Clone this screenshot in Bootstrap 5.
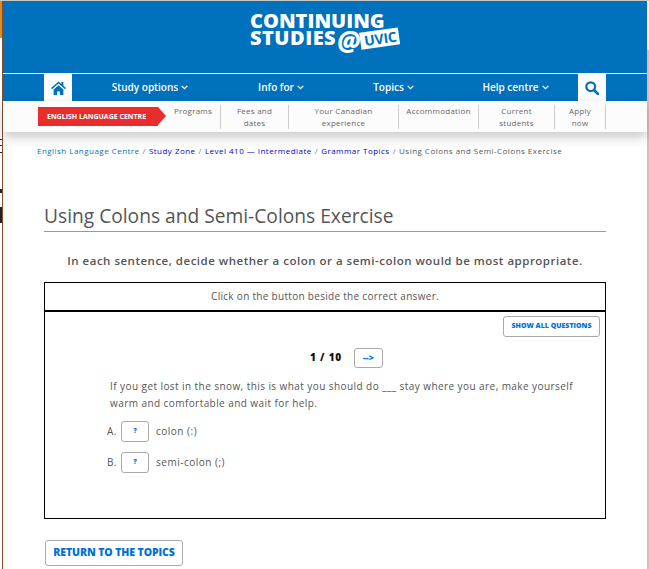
<!DOCTYPE html>
<html lang="en">
<head>
    <meta charset="UTF-8">
    <meta name="viewport" content="width=device-width, initial-scale=1.0">
    <title>Using Colons and Semi-Colons Exercise</title>
    <link rel="stylesheet" href="https://cdn.jsdelivr.net/npm/bootstrap@5.3.0/dist/css/bootstrap.min.css">
    <style>
        html, body {
            height: 569px;
            overflow: hidden;
        }
        body {
            background: #fff;
            font-family: "Open Sans", "Noto Sans", sans-serif;
            color: #555;
            padding-top: 1px;
            box-shadow: inset 0 1px 0 #c8c8c8;
        }
        .window-edge {
            width: 3px;
            height: 568px;
            flex: none;
            position: relative;
            border-right: 1px solid #8a4b2c;
            background: linear-gradient(to bottom, #d98a2b 0, #d98a2b 37px, #fff 37px);
        }
        .edge-mark {
            position: absolute;
            left: 0;
            width: 2px;
            background: #222;
        }
        .scroll-strip {
            width: 2px;
            height: 568px;
            flex: none;
            background: linear-gradient(to bottom, #f2f2f2 0, #f2f2f2 49px, #c6c6c6 49px);
        }
        .page-main {
            width: 644px;
            flex: none;
        }
        .site-head {
            background: #0071bc;
            height: 100px;
        }
        .logo-zone {
            height: 72px;
            padding-left: 247px;
            padding-top: 11px;
            color: #fff;
            font-weight: 800;
            font-size: 20px;
            line-height: 17px;
        }
        .logo-line {
            display: flex;
            align-items: center;
            letter-spacing: .5px;
        }
        .logo-at {
            font-size: 26px;
            line-height: 17px;
            font-style: italic;
            margin-left: 1px;
            letter-spacing: 0;
            transform: translateY(3px);
        }
        .logo-uvic {
            background: #fff;
            color: #0071bc;
            font-size: 14px;
            line-height: 17px;
            font-weight: 700;
            letter-spacing: -.2px;
            padding: 0 3px 0 4px;
            margin-left: 0;
            transform: rotate(-8deg) translateY(1px);
        }
        .main-nav {
            height: 28px;
            border-top: 1px solid #fff;
            padding-left: 41px;
            padding-right: 41px;
        }
        .nav-square {
            width: 28px;
            height: 27px;
            background: #fff;
            flex: none;
        }
        .main-links {
            flex: 1;
            color: #fff;
            font-size: 10px;
            font-weight: 600;
        }
        .main-link {
            text-align: center;
            color: #fff;
            text-decoration: none;
            flex: none;
        }
        .main-link:nth-child(1) { width: 156px; }
        .main-link:nth-child(2) { width: 106px; }
        .main-link:nth-child(3) { width: 119px; }
        .main-link:nth-child(4) { width: 125px; }
        .chev {
            width: 7px;
            height: 5px;
            margin-left: 3px;
            vertical-align: 1px;
        }
        .sub-nav {
            height: 31px;
            background: #fcfcfc;
            padding-left: 35px;
            box-shadow: 0 5px 12px rgba(0, 0, 0, .22);
            position: relative;
        }
        .centre-tag {
            background: #e92c2c;
            color: #fff;
            font-size: 7px;
            font-weight: 700;
            height: 19px;
            width: 120px;
            line-height: 19px;
            padding-left: 9px;
            margin-top: 6px;
            flex: none;
            position: relative;
        }
        .centre-tag::after {
            content: "";
            position: absolute;
            left: 120px;
            top: 0;
            border-left: 8px solid #e92c2c;
            border-top: 9.5px solid transparent;
            border-bottom: 9.5px solid transparent;
        }
        .sub-links {
            margin-left: 8px;
            padding-top: 4px;
        }
        .sub-link {
            height: 24px;
            border-right: 1px solid #ccc;
            font-size: 8px;
            line-height: 12px;
            letter-spacing: .25px;
            text-align: center;
            color: #666;
            font-weight: 500;
            flex: none;
        }
        .crumb-row {
            padding: 14px 0 0 34px;
            font-size: 8px;
            line-height: 10px;
            letter-spacing: .47px;
            margin: 0;
        }
        .crumb-row a {
            color: #0000d0;
            text-decoration: none;
            font-weight: 500;
        }
        .crumb-row a.first-crumb {
            color: #0071bc;
        }
        .crumb-sep {
            margin: 0 3px;
            color: #777;
        }
        .page-body {
            padding: 0 41px;
        }
        .page-title {
            font-size: 19.2px;
            font-weight: 400;
            line-height: 27px;
            color: #555;
            margin: 46px 0 0;
            padding: 0;
            border-bottom: 1px solid #999;
            height: 30px;
        }
        .lead-line {
            font-size: 11.5px;
            font-weight: 600;
            letter-spacing: .5px;
            line-height: 16px;
            text-align: center;
            margin: 21px 0 13px;
            color: #555;
        }
        .exercise-box {
            border: 1px solid #000;
            height: 237px;
        }
        .exercise-note {
            height: 29px;
            line-height: 27px;
            font-size: 10px;
            font-weight: 500;
            letter-spacing: .3px;
            text-align: center;
            border-bottom: 2px solid #000;
        }
        .exercise-inner {
            padding: 4px 5px 0 0;
        }
        .plain-btn {
            background: #fff;
            border: 1px solid #aaa;
            border-radius: 3px;
            color: #0071d8;
            font-weight: 800;
            padding: 0;
            font-family: "Open Sans", sans-serif;
        }
        .show-all {
            width: 97px;
            height: 21px;
            font-size: 7px;
            letter-spacing: 0;
        }
        .counter-row {
            margin-top: 10px;
            padding-left: 48px;
            height: 21px;
        }
        .counter-text {
            font-size: 10px;
            font-weight: 800;
            color: #111;
            margin-right: 12px;
            letter-spacing: .8px;
        }
        .next-btn {
            width: 29px;
            height: 20px;
            font-size: 9px;
            line-height: 16px;
        }
        .question-text {
            margin: 10px 20px 0 65px;
            font-size: 10px;
            line-height: 17px;
            letter-spacing: .43px;
            font-weight: 500;
        }
        .answer-row {
            margin-left: 58px;
            font-size: 10px;
            letter-spacing: .5px;
            font-weight: 500;
            height: 21px;
        }
        .answer-first {
            margin-top: 9px;
        }
        .answer-second {
            margin-top: 10px;
        }
        .answer-letter {
            width: 14px;
            text-align: right;
            margin-right: 4px;
        }
        .answer-btn {
            width: 28px;
            height: 21px;
            font-size: 7px;
            margin-right: 7px;
        }
        .return-btn {
            width: 138px;
            height: 26px;
            font-size: 10.5px;
            letter-spacing: -.1px;
            margin: 21px 0 0 1px;
            display: block;
        }
    </style>
</head>
<body>
    <div class="d-flex">
        <div class="window-edge">
            <span class="edge-mark" style="top:138px;height:1px"></span>
            <span class="edge-mark" style="top:144px;height:1px"></span>
            <span class="edge-mark" style="top:151px;height:1px"></span>
            <span class="edge-mark" style="top:188px;height:4px"></span>
            <span class="edge-mark" style="top:206px;height:16px"></span>
        </div>
        <div class="page-main">
            <header class="site-head">
                <div class="logo-zone">
                    <div>CONTINUING</div>
                    <div class="logo-line">STUDIES<span class="logo-at">@</span><span class="logo-uvic">UVIC</span></div>
                </div>
                <nav class="main-nav d-flex">
                    <a class="nav-square d-flex align-items-center justify-content-center" href="#">
                        <svg width="15" height="14" viewBox="0 0 15 14"><path fill="#0071bc" d="M7.5 0.5 0 7l1 1.2L7.5 2.6 14 8.2 15 7l-2.6-2.3V1h-2v2L7.5.5zM2.6 8.6V14h3.5v-3.6h2.8V14h3.5V8.6L7.5 4.3z"/></svg>
                    </a>
                    <div class="main-links d-flex align-items-center">
                        <a class="main-link" href="#">Study options<svg class="chev" viewBox="0 0 7 5"><path d="M.7.9 3.5 3.7 6.3.9" fill="none" stroke="#fff" stroke-width="1.3"/></svg></a>
                        <a class="main-link" href="#">Info for<svg class="chev" viewBox="0 0 7 5"><path d="M.7.9 3.5 3.7 6.3.9" fill="none" stroke="#fff" stroke-width="1.3"/></svg></a>
                        <a class="main-link" href="#">Topics<svg class="chev" viewBox="0 0 7 5"><path d="M.7.9 3.5 3.7 6.3.9" fill="none" stroke="#fff" stroke-width="1.3"/></svg></a>
                        <a class="main-link" href="#">Help centre<svg class="chev" viewBox="0 0 7 5"><path d="M.7.9 3.5 3.7 6.3.9" fill="none" stroke="#fff" stroke-width="1.3"/></svg></a>
                    </div>
                    <a class="nav-square d-flex align-items-center justify-content-center" href="#">
                        <svg width="14" height="14" viewBox="0 0 14 14"><circle cx="5.7" cy="5.7" r="4.4" fill="none" stroke="#0071bc" stroke-width="2.2"/><path d="M9 9l4 4" stroke="#0071bc" stroke-width="2.6" stroke-linecap="round"/></svg>
                    </a>
                </nav>
            </header>
            <div class="sub-nav d-flex">
                <div class="centre-tag">ENGLISH LANGUAGE CENTRE</div>
                <div class="sub-links d-flex">
                    <div class="sub-link" style="width:55px">Programs</div>
                    <div class="sub-link" style="width:68px">Fees and<br>dates</div>
                    <div class="sub-link" style="width:110px">Your Canadian<br>experience</div>
                    <div class="sub-link" style="width:80px">Accommodation</div>
                    <div class="sub-link" style="width:76px">Current<br>students</div>
                    <div class="sub-link" style="width:51px">Apply<br>now</div>
                </div>
            </div>
            <nav class="crumb-row">
                <a class="first-crumb" href="#">English Language Centre</a><span class="crumb-sep">/</span><a href="#">Study Zone</a><span class="crumb-sep">/</span><a href="#">Level 410 — Intermediate</a><span class="crumb-sep">/</span><a href="#">Grammar Topics</a><span class="crumb-sep">/</span>Using Colons and Semi-Colons Exercise
            </nav>
            <main class="page-body">
                <h1 class="page-title">Using Colons and Semi-Colons Exercise</h1>
                <p class="lead-line">In each sentence, decide whether a colon or a semi-colon would be most appropriate.</p>
                <section class="exercise-box">
                    <div class="exercise-note">Click on the button beside the correct answer.</div>
                    <div class="exercise-inner">
                        <div class="d-flex justify-content-end">
                            <button class="plain-btn show-all" type="button">SHOW ALL QUESTIONS</button>
                        </div>
                        <div class="counter-row d-flex align-items-center justify-content-center">
                            <span class="counter-text">1 / 10</span>
                            <button class="plain-btn next-btn" type="button">--&gt;</button>
                        </div>
                        <p class="question-text">If you get lost in the snow, this is what you should do ___ stay where you are, make yourself warm and comfortable and wait for help.</p>
                        <div class="answer-row answer-first d-flex align-items-center">
                            <span class="answer-letter">A.</span>
                            <button class="plain-btn answer-btn" type="button">?</button>
                            <span>colon (:)</span>
                        </div>
                        <div class="answer-row answer-second d-flex align-items-center">
                            <span class="answer-letter">B.</span>
                            <button class="plain-btn answer-btn" type="button">?</button>
                            <span>semi-colon (;)</span>
                        </div>
                    </div>
                </section>
                <button class="plain-btn return-btn" type="button">RETURN TO THE TOPICS</button>
            </main>
        </div>
        <div class="scroll-strip"></div>
    </div>
    <script src="https://cdn.jsdelivr.net/npm/bootstrap@5.3.0/dist/js/bootstrap.bundle.min.js"></script>
</body>
</html>
